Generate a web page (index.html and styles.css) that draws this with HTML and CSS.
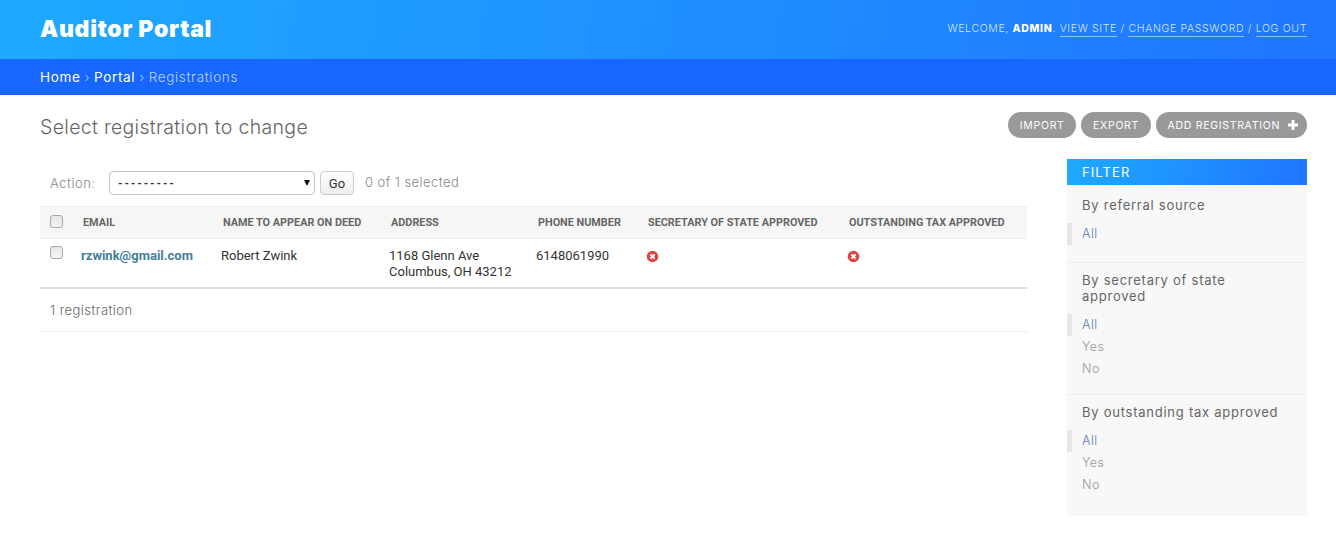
FILE: index.html
```html
<!DOCTYPE html>
<html lang="en">
<head>
    <meta charset="UTF-8">
    <meta name="viewport" content="width=device-width, initial-scale=1.0">
    <title>Select registration to change</title>
    <link rel="stylesheet" href="styles.css">
</head>
<body>

    <header class="site-header">
        <h1 class="brand">Auditor Portal</h1>
        <div class="user-tools">
            Welcome, <strong>admin</strong>.
            <a href="#">View site</a> /
            <a href="#">Change password</a> /
            <a href="#">Log out</a>
        </div>
    </header>

    <nav class="breadcrumbs">
        <a href="#">Home</a> <span class="sep">›</span> <a href="#">Portal</a> <span class="sep">›</span> Registrations
    </nav>

    <main class="content">
        <div class="title-row">
            <h2 class="page-title">Select registration to change</h2>
            <div class="object-tools">
                <a class="tool-btn" href="#">Import</a>
                <a class="tool-btn" href="#">Export</a>
                <a class="tool-btn tool-add" href="#">Add registration
                    <svg class="plus" width="10" height="10" viewBox="0 0 10 10"><path d="M3.6 0h2.8v3.6H10v2.8H6.4V10H3.6V6.4H0V3.6h3.6z" fill="#fff"/></svg>
                </a>
            </div>
        </div>

        <div class="columns">
            <section class="changelist">
                <div class="actions">
                    <label class="action-label">Action:</label>
                    <select class="action-select">
                        <option>---------</option>
                    </select>
                    <button class="go-btn">Go</button>
                    <span class="counter">0 of 1 selected</span>
                </div>

                <table class="results">
                    <thead>
                        <tr>
                            <th class="col-check"><input type="checkbox"></th>
                            <th class="col-email">Email</th>
                            <th class="col-name">Name to appear on deed</th>
                            <th class="col-address">Address</th>
                            <th class="col-phone">Phone number</th>
                            <th class="col-state">Secretary of state approved</th>
                            <th>Outstanding tax approved</th>
                        </tr>
                    </thead>
                    <tbody>
                        <tr>
                            <td class="col-check"><input type="checkbox"></td>
                            <td class="email-cell"><a href="#">rzwink@gmail.com</a></td>
                            <td>Robert Zwink</td>
                            <td>1168 Glenn Ave<br>Columbus, OH 43212</td>
                            <td>6148061990</td>
                            <td><svg class="no-icon" width="13" height="13" viewBox="0 0 13 13"><circle cx="6.5" cy="6.5" r="5.8" fill="#dd4646"/><path d="M4.4 4.4l4.2 4.2M8.6 4.4l-4.2 4.2" stroke="#fff" stroke-width="2"/></svg></td>
                            <td><svg class="no-icon" width="13" height="13" viewBox="0 0 13 13"><circle cx="6.5" cy="6.5" r="5.8" fill="#dd4646"/><path d="M4.4 4.4l4.2 4.2M8.6 4.4l-4.2 4.2" stroke="#fff" stroke-width="2"/></svg></td>
                        </tr>
                    </tbody>
                </table>

                <p class="paginator">1 registration</p>
            </section>

            <aside class="filter">
                <h3 class="filter-head">Filter</h3>

                <div class="filter-group">
                    <h4>By referral source</h4>
                    <ul>
                        <li class="selected"><a href="#">All</a></li>
                    </ul>
                </div>

                <div class="filter-group">
                    <h4>By secretary of state approved</h4>
                    <ul>
                        <li class="selected"><a href="#">All</a></li>
                        <li><a href="#">Yes</a></li>
                        <li><a href="#">No</a></li>
                    </ul>
                </div>

                <div class="filter-group">
                    <h4>By outstanding tax approved</h4>
                    <ul>
                        <li class="selected"><a href="#">All</a></li>
                        <li><a href="#">Yes</a></li>
                        <li><a href="#">No</a></li>
                    </ul>
                </div>
            </aside>
        </div>
    </main>

</body>
</html>
```

FILE: styles.css
```css
* {
    margin: 0;
    padding: 0;
    box-sizing: border-box;
}
body {
    font-family: "Inter", "Noto Sans", sans-serif;
    font-size: 13px;
    color: #333;
    background: #fff;
}
a {
    text-decoration: none;
}

/* header */
.site-header {
    height: 59px;
    padding: 0 29px 2px 40px;
    display: flex;
    align-items: center;
    justify-content: space-between;
    background: linear-gradient(100deg, #1eaaff 0%, #2075ff 100%);
}
.brand {
    font-size: 23px;
    font-weight: 900;
    letter-spacing: 0.7px;
    color: #fff;
}
.user-tools {
    font-size: 10.5px;
    font-weight: 300;
    letter-spacing: 0.65px;
    text-transform: uppercase;
    color: #cfe4ff;
}
.user-tools strong {
    font-weight: 800;
    color: #fff;
}
.user-tools a {
    color: #cfe4ff;
    border-bottom: 1px solid #8fc0ff;
    padding-bottom: 1px;
}
.breadcrumbs {
    height: 36px;
    padding: 0 40px;
    display: flex;
    align-items: center;
    gap: 4px;
    font-size: 13.5px;
    font-weight: 300;
    letter-spacing: 0.65px;
    background: #1766fd;
    color: #b9d3ff;
}
.breadcrumbs a {
    font-weight: 400;
    color: #fff;
}
.breadcrumbs .sep {
    color: #a9c8ff;
}

/* content */
.content {
    padding: 17px 29px 0 40px;
}
.title-row {
    display: flex;
    justify-content: space-between;
    align-items: flex-start;
    height: 47px;
}
.page-title {
    font-size: 19.5px;
    font-weight: 300;
    letter-spacing: 0.32px;
    line-height: 30px;
    color: #666;
}
.object-tools {
    display: flex;
    gap: 5px;
}
.tool-btn {
    height: 26px;
    padding: 0 11.75px;
    display: flex;
    align-items: center;
    border-radius: 13px;
    background: #999;
    color: #fff;
    font-size: 10.5px;
    letter-spacing: 0.7px;
    text-transform: uppercase;
}
.tool-add {
    padding-right: 9px;
    gap: 8px;
}
.columns {
    display: flex;
    justify-content: space-between;
    align-items: flex-start;
}
.changelist {
    width: 987px;
}

/* actions bar */
.actions {
    height: 47px;
    padding: 12px 0 0 10px;
    display: flex;
    align-items: flex-start;
}
.action-label {
    width: 59px;
    line-height: 24px;
    font-weight: 300;
    letter-spacing: 0.55px;
    color: #888;
}
.action-select {
    appearance: none;
    width: 206px;
    height: 24px;
    padding-left: 7px;
    border: 1px solid #c4c4c4;
    border-radius: 4px;
    background: #fff url("data:image/svg+xml,%3Csvg xmlns='http://www.w3.org/2000/svg' width='6' height='6'%3E%3Cpath d='M0 0h6L3 6z' fill='%23111'/%3E%3C/svg%3E") no-repeat 194px 8px;
    font-family: "Liberation Mono", monospace;
    font-size: 10.7px;
    font-weight: 700;
    color: #333;
}
.go-btn {
    width: 34px;
    height: 24px;
    margin-left: 5px;
    border: 1px solid #ccc;
    border-radius: 4px;
    background: linear-gradient(#fff, #eee);
    font-family: "Roboto", sans-serif;
    font-size: 13px;
    color: #333;
}
.counter {
    margin-left: 11px;
    line-height: 22px;
    font-weight: 300;
    letter-spacing: 0.45px;
    color: #888;
}

/* table */
.results {
    width: 100%;
    border-collapse: collapse;
    table-layout: fixed;
    font-family: "Roboto", sans-serif;
}
.results th {
    height: 32px;
    padding: 1px 10px 0;
    background: #f6f6f6;
    border-top: 1px solid #eee;
    border-bottom: 1px solid #eee;
    font-size: 10.85px;
    font-weight: 700;
    line-height: 1;
    text-align: left;
    text-transform: uppercase;
    color: #666;
    white-space: nowrap;
}
.results td {
    height: 48px;
    padding: 9px 8px 7px;
    border-bottom: 2px solid #ddd;
    font-size: 13px;
    line-height: 16px;
    vertical-align: top;
    color: #333;
}
.results input {
    appearance: none;
    display: block;
    width: 13px;
    height: 13px;
    border: 1px solid #a8a8a8;
    border-radius: 3px;
    background: linear-gradient(#e6e6e6, #f4f4f4);
}
.results .col-check {
    width: 33px;
}
.results th.col-check input {
    margin-top: -4px;
}
.results td.col-check {
    padding-left: 10px;
    padding-top: 7px;
}
th.col-email {
    width: 140px;
}
th.col-name {
    width: 168px;
}
th.col-address {
    width: 147px;
}
th.col-phone {
    width: 110px;
}
th.col-state {
    width: 201px;
}
.email-cell a {
    font-weight: 700;
    color: #447e9b;
}
.no-icon {
    display: block;
    margin-top: 2px;
}
.paginator {
    height: 43px;
    padding-left: 10px;
    border-bottom: 1px solid #eee;
    line-height: 42px;
    font-weight: 300;
    letter-spacing: 0.45px;
    color: #666;
}

/* sidebar */
.filter {
    width: 240px;
    height: 357px;
    background: #f8f8f8;
}
.filter-head {
    height: 26px;
    padding-left: 15px;
    background: linear-gradient(100deg, #1eaaff 0%, #2075ff 100%);
    color: #fff;
    font-size: 13px;
    font-weight: 400;
    letter-spacing: 1.1px;
    line-height: 26px;
    text-transform: uppercase;
}
.filter-group {
    padding: 9px 0 14px;
    border-bottom: 1px solid #eaeaea;
}
.filter-head + .filter-group {
    padding: 12px 0 17px;
}
.filter-group:last-child {
    border-bottom: none;
}
.filter-group h4 {
    padding: 0 24px 0 15px;
    margin-bottom: 10px;
    font-size: 13px;
    font-weight: 400;
    letter-spacing: 0.75px;
    line-height: 16px;
    color: #666;
}
.filter-group ul {
    list-style: none;
}
.filter-group li {
    height: 22px;
    padding-left: 15px;
    line-height: 22px;
    font-size: 12.5px;
    font-weight: 300;
    letter-spacing: 0.5px;
}
.filter-group li a {
    color: #999;
}
.filter-group li.selected {
    padding-left: 10px;
    border-left: 5px solid #e6e6e6;
}
.filter-group li.selected a {
    color: #5b80b2;
}
```
